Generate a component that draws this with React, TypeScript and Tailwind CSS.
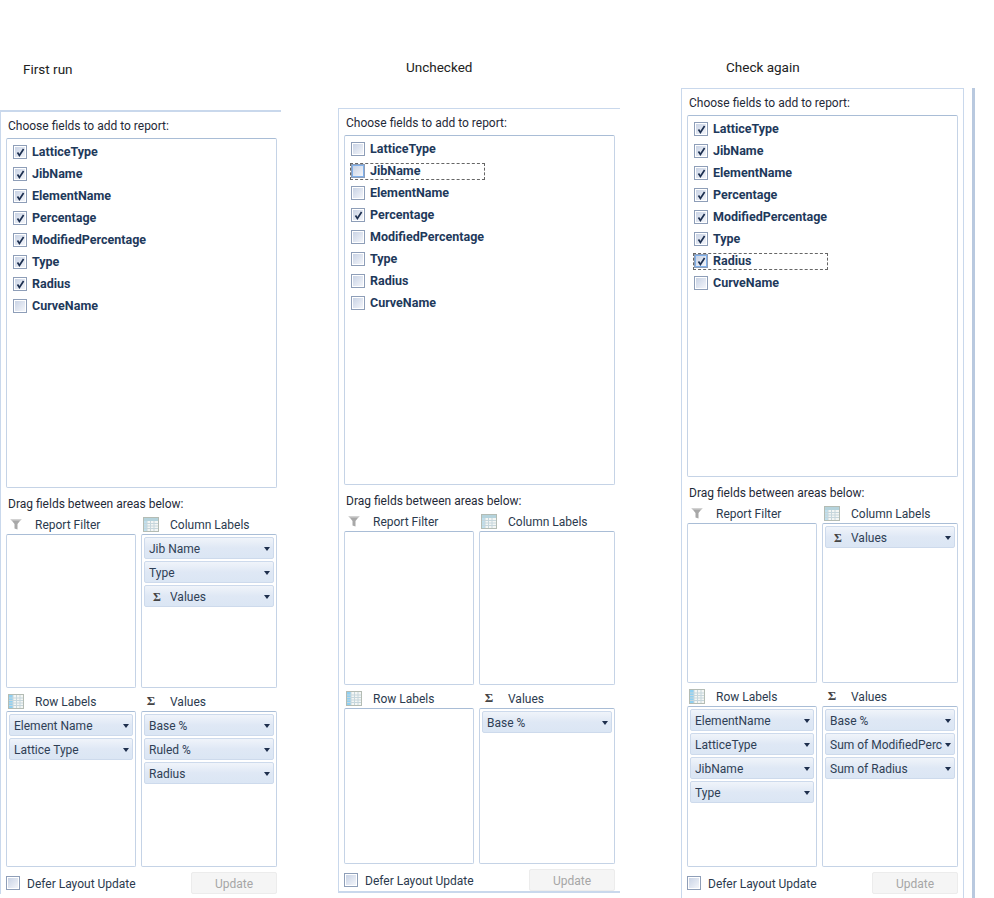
import React from "react";

type Pill = { label: string; sigma?: boolean };

const Check = () => (
  <svg viewBox="0 0 9 9" className="w-[9px] h-[9px] block">
    <path d="M1.5 4.6 L3.4 7.4 L7.6 1" fill="none" stroke="#1c2f50" strokeWidth="1.7" />
  </svg>
);

const CheckBox = ({ checked, focused }: { checked?: boolean; focused?: boolean }) => (
  <div className="w-[14px] h-[14px] shrink-0 border border-[#8e9eb8] bg-white p-px">
    <div
      className={
        "w-full h-full flex items-center justify-center bg-gradient-to-br from-[#c9d3e5] to-[#f3f5fa] " +
        (focused ? "outline outline-1 outline-[#7fb0ea]" : "")
      }
    >
      {checked && <Check />}
    </div>
  </div>
);

const FilterIcon = () => (
  <svg viewBox="0 0 16 16" className="w-4 h-4 block">
    <path d="M2.5 3 H13.5 L9.5 8 V13.5 L6.5 12.5 V8 Z" fill="#a8a8a8" />
    <path d="M2.5 3 H13.5 L12.5 4.5 H3.5 Z" fill="#d2d2d2" />
  </svg>
);

const TableIcon = () => (
  <svg viewBox="0 0 16 15" className="w-4 h-[15px] block">
    <rect x="0.5" y="0.5" width="15" height="14" fill="#f4f6f4" stroke="#b4bcb4" />
    <rect x="1" y="1" width="14" height="3" fill="#b5d3dc" />
    <rect x="1" y="4" width="3" height="10" fill="#bfe0ee" />
    <path d="M1 6.5H15M1 9H15M1 11.5H15M4 4V14M7.5 4V14M11 4V14" stroke="#c6d6dc" strokeWidth="1" fill="none" />
  </svg>
);

const RowIcon = () => (
  <svg viewBox="0 0 16 15" className="w-4 h-[15px] block">
    <rect x="0.5" y="0.5" width="15" height="14" fill="#f4f6f4" stroke="#b4bcb4" />
    <rect x="1" y="1" width="4" height="13" fill="#8fd0f2" />
    <path d="M1 4H15M1 6.5H15M1 9H15M1 11.5H15M5 1V14M8.5 1V14M12 1V14" stroke="#c6d6dc" strokeWidth="1" fill="none" />
  </svg>
);

const Sigma = () => (
  <span className="block w-4 text-center text-[13px] leading-4 font-bold text-[#444] font-['Liberation_Serif',serif]">Σ</span>
);

const FieldPill = ({ label, sigma }: Pill) => (
  <div className="h-[22px] flex items-center rounded-[2px] border border-[#cddaec] bg-gradient-to-b from-[#f0f4fa] via-[#dfe8f5] to-[#dbe6f4] pl-[4px] pr-[3px] pt-px text-[#2f3f55]">
    {sigma && <span className="w-[21px] pl-[4px] text-[12px] font-bold text-[#444] font-['Liberation_Serif',serif]">Σ</span>}
    <span className="flex-1 overflow-hidden whitespace-nowrap">{label}</span>
    <span className="w-0 h-0 border-x-[3.5px] border-x-transparent border-t-[4px] border-t-[#1e2f4d]" />
  </div>
);

const Area = ({
  icon,
  title,
  pills,
  boxH,
  className,
}: {
  icon: React.ReactNode;
  title: string;
  pills: Pill[];
  boxH: string;
  className?: string;
}) => (
  <div className={className}>
    <div className="flex items-center h-4 mb-[2px] pl-[2px]">
      <span className="w-[27px] shrink-0">{icon}</span>
      <span className="pt-px text-[#2b3a4e]">{title}</span>
    </div>
    <div className={"rounded-[2px] border border-[#c5d3e6] border-t-[#a9bdd6] p-[2px] flex flex-col gap-[2px] " + boxH}>
      {pills.map((p) => (
        <FieldPill key={p.label} {...p} />
      ))}
    </div>
  </div>
);

type PanelProps = {
  fields: [string, boolean][];
  focus?: string;
  listH: string;
  topH: string;
  botH: string;
  filter: Pill[];
  columns: Pill[];
  rows: Pill[];
  values: Pill[];
  frame: string;
};

const Panel = ({ fields, focus, listH, topH, botH, filter, columns, rows, values, frame }: PanelProps) => (
  <div className={"pl-[5px] pt-[6px] " + frame}>
    <div className="w-[271px]">
      <div className="h-4 pl-[2px] text-[#1f2a38]">Choose fields to add to report:</div>
      <div className={"mt-[4px] rounded-[2px] border border-[#c5d3e6] border-t-[#a9bdd6] pt-[2px] " + listH}>
        {fields.map(([name, on]) => (
          <div key={name} className="h-[22px] flex items-center pl-[5px]">
            <div
              className={
                "w-[135px] h-[17px] flex items-center border border-dashed " +
                (focus === name ? "border-[#666]" : "border-transparent")
              }
            >
              <CheckBox checked={on} focused={focus === name} />
              <span className="ml-[5px] text-[12.5px] font-bold text-[#1e395b] whitespace-nowrap">{name}</span>
            </div>
          </div>
        ))}
      </div>
      <div className="mt-[8px] h-4 pl-[2px] text-[#1f2a38]">Drag fields between areas below:</div>
      <div className="mt-[4px] grid grid-cols-[130px_136px] gap-x-[5px]">
        <Area icon={<FilterIcon />} title="Report Filter" pills={filter} boxH={topH} />
        <Area icon={<TableIcon />} title="Column Labels" pills={columns} boxH={topH} />
        <Area icon={<RowIcon />} title="Row Labels" pills={rows} boxH={botH} className="mt-[5px]" />
        <Area icon={<Sigma />} title="Values" pills={values} boxH={botH} className="mt-[5px]" />
      </div>
      <div className="mt-[5px] flex items-center justify-between">
        <div className="flex items-center">
          <CheckBox />
          <span className="ml-[7px] pt-px text-[#2b3a4e]">Defer Layout Update</span>
        </div>
        <div className="w-[86px] h-[22px] pt-px flex items-center justify-center rounded-[2px] border border-[#ececec] bg-[#f5f5f5] text-[#a6a6a6]">
          Update
        </div>
      </div>
    </div>
  </div>
);

const names = ["LatticeType", "JibName", "ElementName", "Percentage", "ModifiedPercentage", "Type", "Radius", "CurveName"];
const withOn = (on: string[]) => names.map((n) => [n, on.includes(n)] as [string, boolean]);

export default function App() {
  return (
    <div className="w-[994px] h-[898px] overflow-hidden bg-white flex items-start text-[12px] leading-4 font-['Roboto','Noto_Sans',sans-serif]">
      <div className="w-[281px] shrink-0">
        <div className="h-[110px] pt-[61px] pl-[23px] text-[13.5px] text-[#222]">First run</div>
        <Panel
          frame="border-t-2 border-l border-[#c9d8ec]"
          fields={withOn(["LatticeType", "JibName", "ElementName", "Percentage", "ModifiedPercentage", "Type", "Radius"])}
          listH="h-[350px]"
          topH="h-[154px]"
          botH="h-[156px]"
          filter={[]}
          columns={[{ label: "Jib Name" }, { label: "Type" }, { label: "Values", sigma: true }]}
          rows={[{ label: "Element Name" }, { label: "Lattice Type" }]}
          values={[{ label: "Base %" }, { label: "Ruled %" }, { label: "Radius" }]}
        />
      </div>
      <div className="ml-[57px] w-[282px] shrink-0">
        <div className="h-[108px] pt-[59px] pl-[68px] text-[13.5px] text-[#222]">Unchecked</div>
        <Panel
          frame="border-t border-l border-b-2 border-[#c9d8ec]"
          fields={withOn(["Percentage"])}
          focus="JibName"
          listH="h-[350px]"
          topH="h-[154px]"
          botH="h-[156px]"
          filter={[]}
          columns={[]}
          rows={[]}
          values={[{ label: "Base %" }]}
        />
      </div>
      <div className="ml-[61px] w-[283px] shrink-0">
        <div className="h-[88px] pt-[59px] pl-[45px] text-[13.5px] text-[#222]">Check again</div>
        <Panel
          frame="border-t border-x border-[#c9d8ec] h-[812px]"
          fields={withOn(["LatticeType", "JibName", "ElementName", "Percentage", "ModifiedPercentage", "Type", "Radius"])}
          focus="Radius"
          listH="h-[362px]"
          topH="h-[160px]"
          botH="h-[161px]"
          filter={[]}
          columns={[{ label: "Values", sigma: true }]}
          rows={[{ label: "ElementName" }, { label: "LatticeType" }, { label: "JibName" }, { label: "Type" }]}
          values={[{ label: "Base %" }, { label: "Sum of ModifiedPerc" }, { label: "Sum of Radius" }]}
        />
      </div>
      <div className="ml-[8px] mt-[88px] w-[3px] h-[810px] shrink-0 bg-[#b9c9df]" />
    </div>
  );
}
